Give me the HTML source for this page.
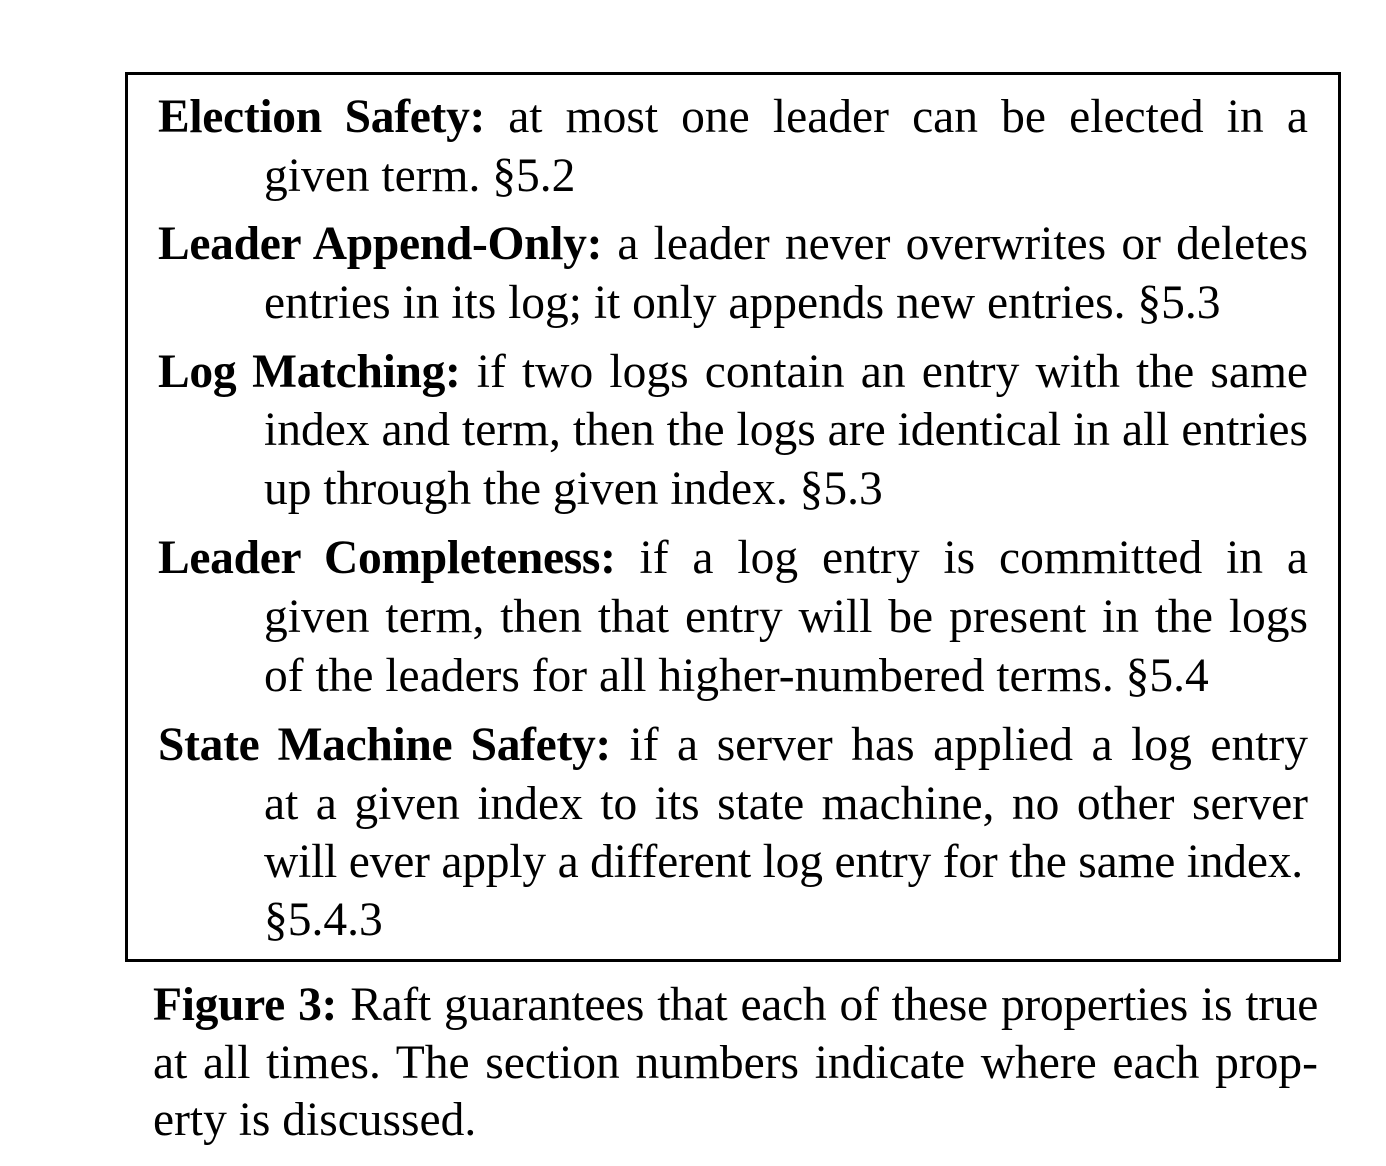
<!DOCTYPE html>
<html><head><meta charset="utf-8"><style>
html,body{margin:0;padding:0;background:#fff;}
body{width:1386px;height:1166px;position:relative;overflow:hidden;font-family:"Liberation Serif",serif;color:#000;}
.box{position:absolute;left:125px;top:72px;width:1210px;height:884px;border:3px solid #000;}
.l{position:absolute;font-size:47.5px;line-height:46px;white-space:normal;}
.j{text-align:justify;text-align-last:justify;}
.a{left:158px;width:1150px;}
.b{left:264px;width:1044px;}
.c{left:153px;width:1165px;}
b{font-weight:bold;letter-spacing:-0.3px;}
</style></head><body>
<div class="box"></div>
<div class="l a j" style="top:94px"><b>Election Safety:</b> at most one leader can be elected in a</div>
<div class="l b" style="top:153px">given term. §5.2</div>
<div class="l a j" style="top:221px"><b>Leader Append-Only:</b> a leader never overwrites or deletes</div>
<div class="l b" style="top:280px">entries in its log; it only appends new entries. §5.3</div>
<div class="l a j" style="top:349px"><b>Log Matching:</b> if two logs contain an entry with the same</div>
<div class="l b j" style="top:407px">index and term, then the logs are identical in all entries</div>
<div class="l b" style="top:466px">up through the given index. §5.3</div>
<div class="l a j" style="top:535px"><b>Leader Completeness:</b> if a log entry is committed in a</div>
<div class="l b j" style="top:594px">given term, then that entry will be present in the logs</div>
<div class="l b" style="top:653px">of the leaders for all higher-numbered terms. §5.4</div>
<div class="l a j" style="top:722px"><b>State Machine Safety:</b> if a server has applied a log entry</div>
<div class="l b j" style="top:781px">at a given index to its state machine, no other server</div>
<div class="l b" style="top:839px;white-space:nowrap;letter-spacing:-0.2px">will ever apply a different log entry for the same index.</div>
<div class="l b" style="top:897px">§5.4.3</div>
<div class="l c j" style="top:982px;word-spacing:-5px;letter-spacing:-0.3px"><b>Figure 3:</b> Raft guarantees that each of these properties is true</div>
<div class="l c j" style="top:1040px">at all times. The section numbers indicate where each prop-</div>
<div class="l c" style="top:1097px">erty is discussed.</div>
</body></html>
